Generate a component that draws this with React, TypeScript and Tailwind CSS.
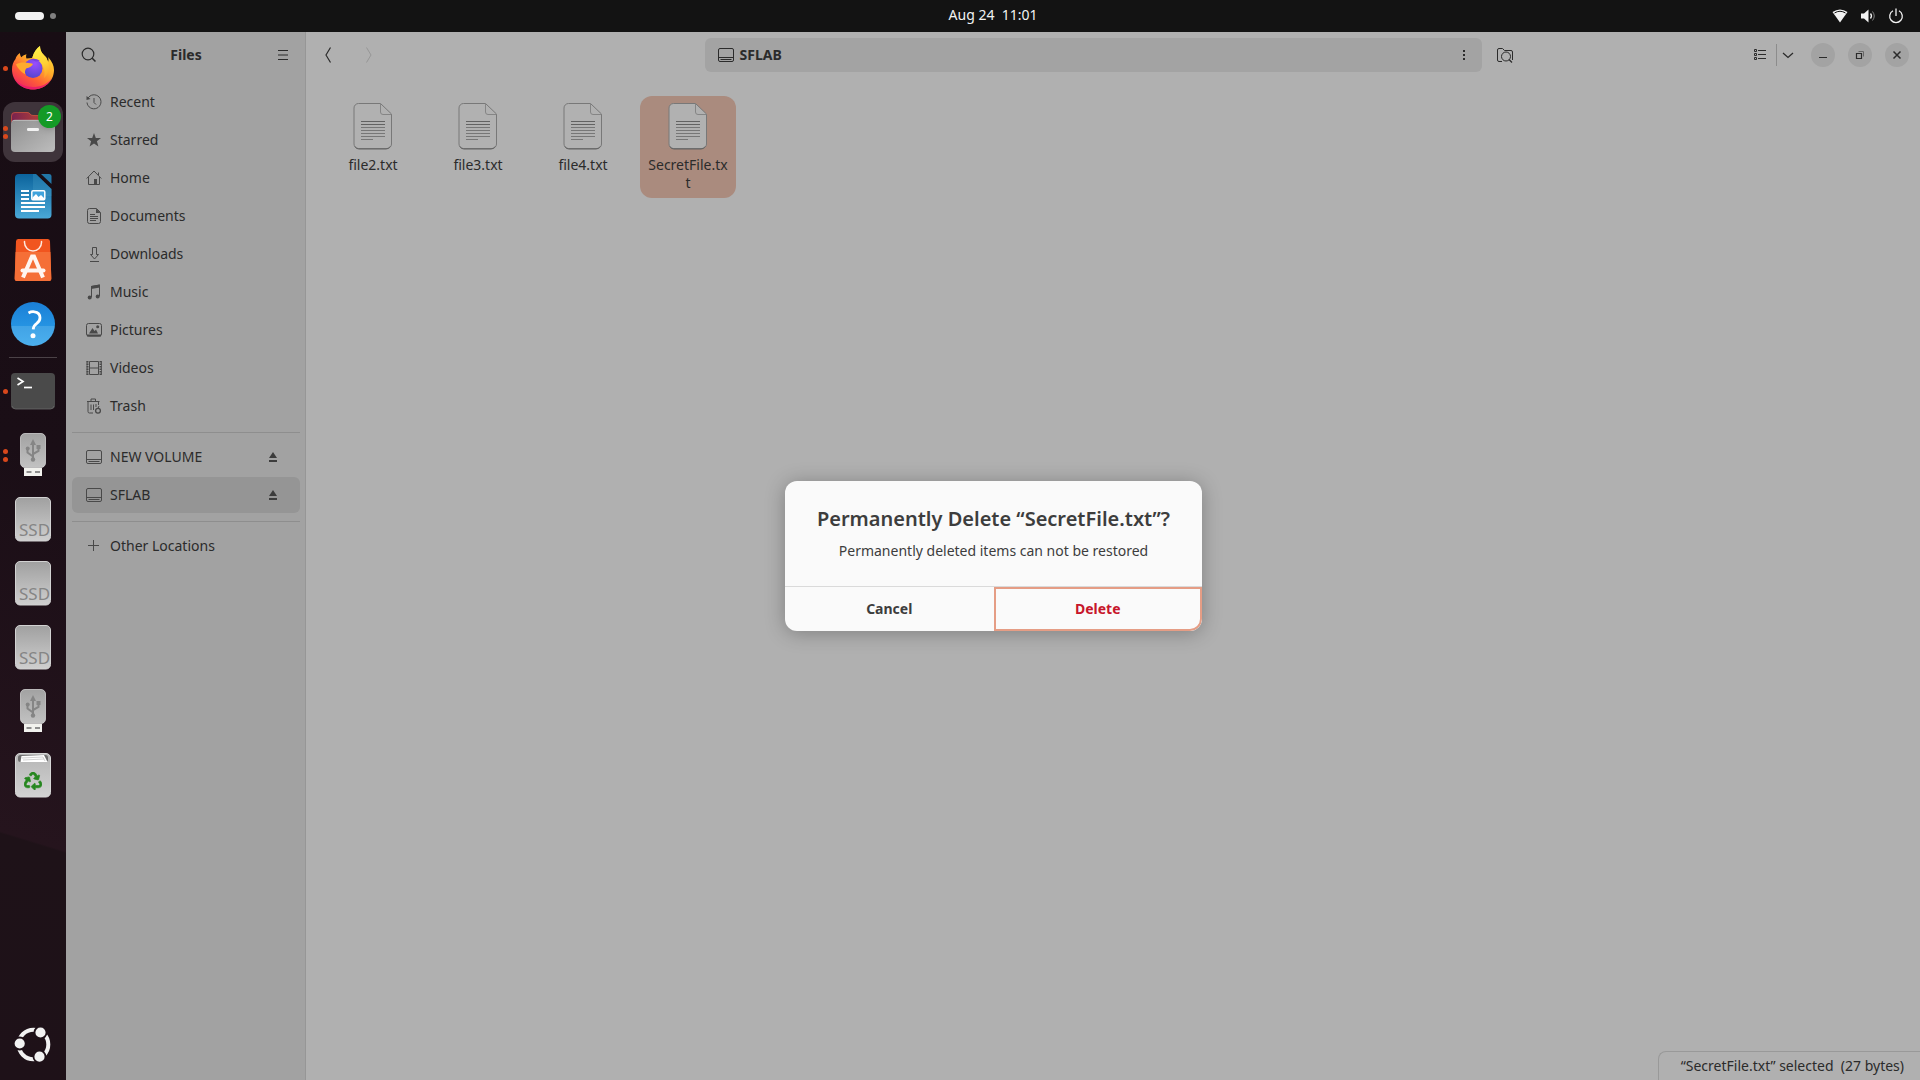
import type { ReactNode } from "react";
import { FaRecycle } from "react-icons/fa";

/* ---------- dock artwork ---------- */

function Art({ children, label }: { children: ReactNode; label: string }) {
  return (
    <svg viewBox="0 0 48 48" className="size-12" role="img" aria-label={label}>
      {children}
    </svg>
  );
}

function Firefox() {
  return (
    <Art label="Firefox">
      <defs>
        <linearGradient id="ffBody" x1="0.9" y1="0.1" x2="0.3" y2="1">
          <stop offset="0" stopColor="#ffe33a" />
          <stop offset="0.4" stopColor="#ffac2a" />
          <stop offset="0.7" stopColor="#ff5f36" />
          <stop offset="1" stopColor="#ee2a5c" />
        </linearGradient>
        <linearGradient id="ffFlame" x1="0.4" y1="0" x2="0.6" y2="1">
          <stop offset="0" stopColor="#fff14a" />
          <stop offset="0.6" stopColor="#ffd034" />
          <stop offset="1" stopColor="#ffa02b" />
        </linearGradient>
        <radialGradient id="ffGlobe" cx="0.6" cy="0.25" r="0.8">
          <stop offset="0" stopColor="#9a4dff" />
          <stop offset="1" stopColor="#5145cc" />
        </radialGradient>
      </defs>
      <path
        d="M6.500 15 C7 12.500 8.500 10.500 11 9 C11 11 11.500 12.500 12.500 13.200 C14 11.500 15.500 10.800 17.500 10.300 C16.800 12 17 13.500 17.500 14.500 L23 14 C25 9 27 5 31 2 C31 8 34 10 37 13 C38 15 38.500 17 38.800 18.500 C39.600 17 39.700 15 39 13 C43 17 45 22 45 26 C45 37 35.500 45.500 24 45.500 C12 45.500 3 36.500 3 25.500 C3 21.500 4.200 17.500 6.500 15 Z"
        fill="url(#ffBody)"
      />
      <path d="M5 34 C9 42 17 45.500 24 45.500 C33 45.500 40 40.500 43 34 C38 41 31 43 24 43 C16 43 9 40 5 34 Z" fill="#e8176f" opacity="0.8" />
      <path d="M23.500 13.500 C24.500 8 27.500 4.500 31 2 C31 8 34.500 10.500 37.500 14 C41 20 41.500 29 35 34 C37 26 34 20 29 17 Z" fill="url(#ffFlame)" />
      <circle cx="24" cy="24.500" r="9.500" fill="url(#ffGlobe)" />
      <path d="M7 20.500 C10 18 15 18.500 18 18.700 C20 18.800 23 19.200 24 20 C23 22.500 20.500 23.500 17.500 24.300 C16 26 15.500 28 16.500 30.500 C12 28 9 24.500 7 20.500 Z" fill="#ffab2e" />
      <path d="M21 15.500 C24 14 28 14.500 31 17 C29 16.800 28 17 27 17.500 C25 16.500 23 16 21 15.500 Z" fill="#7a3fe0" />
    </Art>
  );
}

function FilesApp() {
  return (
    <Art label="Files">
      <defs>
        <linearGradient id="fBack" x1="0" y1="0" x2="1" y2="0">
          <stop offset="0" stopColor="#77214f" />
          <stop offset="1" stopColor="#d0502f" />
        </linearGradient>
        <linearGradient id="fFront" x1="0" y1="0" x2="1" y2="1">
          <stop offset="0" stopColor="#8f8f8f" />
          <stop offset="1" stopColor="#bdbdbd" />
        </linearGradient>
      </defs>
      <path d="M2 20 V8 a4 4 0 0 1 4 -4 H18 q2 0 3 1.500 t3 1.500 H42 a4 4 0 0 1 4 4 V20 Z" fill="url(#fBack)" />
      <path d="M2.500 14 V8 a3.500 3.500 0 0 1 3.500 -3.500 H18 q2 0 3 1.500 t3 1.500 H42" fill="none" stroke="#c2543f" strokeWidth="0.8" />
      <rect x="2" y="12" width="44" height="32" rx="4" fill="url(#fFront)" />
      <path d="M3.500 13 q1 -0.700 2.500 -0.700 H42 q1.500 0 2.500 0.700" fill="none" stroke="#c8c8c8" strokeWidth="0.8" />
      <rect x="18" y="20" width="12" height="3" rx="1.200" fill="#f2f2f2" />
    </Art>
  );
}

function Writer() {
  return (
    <Art label="LibreOffice Writer">
      <defs>
        <linearGradient id="wr" x1="0" y1="0" x2="0" y2="1">
          <stop offset="0" stopColor="#0b639c" />
          <stop offset="1" stopColor="#4aa9d8" />
        </linearGradient>
      </defs>
      <path d="M10 2 H27 L42.500 17 V42.500 a4 4 0 0 1 -4 4 H10 a4 4 0 0 1 -4 -4 V6 a4 4 0 0 1 4 -4 Z" fill="url(#wr)" />
      <path d="M24 2 H27 L42.500 17 V24 H24 Z" fill="#4aa0c8" opacity="0.3" />
      <path d="M32 2 H40 a2.500 2.500 0 0 1 2.500 2.500 V12 Z" fill="#2277a8" />
      <path d="M12 19 h8 M12 23 h8 M12 27 h8 M12 31 h24 M12 35 h24 M12 39 h18" stroke="#fff" strokeWidth="2" />
      <rect x="22.800" y="18.800" width="13" height="9" rx="1.200" fill="#3fa3dc" stroke="#fff" strokeWidth="1.500" />
      <path d="M23.500 27 V25.500 L27 22 l2.500 3 l2.500 -2 l3 3 V27 Z" fill="#fff" />
    </Art>
  );
}

function AppCenter() {
  return (
    <Art label="App Center">
      <path d="M9.500 3 H38.500 a2.500 2.500 0 0 1 2.500 2.300 L42.300 42 a2.800 2.800 0 0 1 -2.800 3 H8.500 a2.800 2.800 0 0 1 -2.800 -3 L7 5.300 a2.500 2.500 0 0 1 2.500 -2.300 Z" fill="#f1551f" />
      <path d="M6.600 16 H41.400 L42.300 42 a2.800 2.800 0 0 1 -2.800 3 H8.500 a2.800 2.800 0 0 1 -2.800 -3 Z" fill="#f56f37" />
      <path d="M15.500 5.500 v1 a8.500 8.500 0 0 0 17 0 v-1" fill="none" stroke="#fde9df" strokeWidth="1.500" strokeLinecap="round" />
      <path d="M14 41.500 L23 20.500 H25 L34 41.500" fill="none" stroke="#fff5f0" strokeWidth="4" />
      <path d="M13.500 34.500 H34.500" stroke="#fff5f0" strokeWidth="4" strokeLinecap="round" />
    </Art>
  );
}

function Help() {
  return (
    <Art label="Help">
      <defs>
        <linearGradient id="hp" x1="0" y1="0" x2="0" y2="1">
          <stop offset="0" stopColor="#1b7fd6" />
          <stop offset="0.540" stopColor="#2593e2" />
          <stop offset="0.550" stopColor="#41a3e6" />
          <stop offset="1" stopColor="#4cb0ee" />
        </linearGradient>
      </defs>
      <circle cx="24" cy="24" r="22" fill="url(#hp)" />
      <path d="M19.500 13 q3 -1.700 6 -1.200 q5.500 0.700 5.500 6 q0 3.200 -3.200 5.600 q-3.300 2.300 -3.600 6" fill="none" stroke="#fff" strokeWidth="2.800" />
      <circle cx="24" cy="35.700" r="2.500" fill="#fff" />
    </Art>
  );
}

function TerminalApp() {
  return (
    <Art label="Terminal">
      <rect x="2" y="6" width="44" height="36" rx="4" fill="#4a4a4a" />
      <path d="M3 39 q1 3 3.500 3 H41.500 q2.500 0 3.500 -3" fill="none" stroke="#6a6a6a" strokeWidth="0.8" />
      <path d="M8.500 11 l5.500 3.500 l-5.500 3.500" fill="none" stroke="#fff" strokeWidth="1.700" />
      <path d="M15 20.500 h8" stroke="#fff" strokeWidth="1.700" />
    </Art>
  );
}

function Usb() {
  return (
    <Art label="USB drive">
      <defs>
        <linearGradient id="us" x1="0" y1="0" x2="0" y2="1">
          <stop offset="0" stopColor="#a2a2a2" />
          <stop offset="1" stopColor="#c2c2c2" />
        </linearGradient>
      </defs>
      <rect x="11.500" y="2.500" width="25" height="34" rx="4.500" fill="url(#us)" stroke="#d0d0d0" strokeWidth="0.800" />
      <g fill="none" stroke="#858585" strokeWidth="2">
        <path d="M24 12 V29" />
        <path d="M24 25.500 L18.500 21.500 V18" />
        <path d="M24 23 L29.500 20 V16.500" />
      </g>
      <path d="M24 8 l3 6 h-6 Z" fill="#858585" />
      <circle cx="18.700" cy="17.500" r="2" fill="#858585" />
      <rect x="27.500" y="14" width="4" height="4" fill="#858585" />
      <circle cx="24" cy="28.500" r="2.200" fill="#858585" />
      <rect x="15" y="37" width="18" height="8" fill="#f2f2ee" />
      <path d="M17.500 41 h5 M26 41 h5" stroke="#8e8e8e" strokeWidth="2" />
    </Art>
  );
}

function Ssd() {
  return (
    <Art label="SSD">
      <defs>
        <linearGradient id="sd" x1="0" y1="0" x2="0" y2="1">
          <stop offset="0" stopColor="#a0a0a0" />
          <stop offset="1" stopColor="#cfcfcf" />
        </linearGradient>
      </defs>
      <rect x="6.500" y="2.500" width="35" height="43.500" rx="4.500" fill="url(#sd)" stroke="#d2d2d2" strokeWidth="1" />
      <text x="10" y="41" fontFamily="Noto Sans, sans-serif" fontSize="17" fill="#858585">
        SSD
      </text>
    </Art>
  );
}

function TrashApp() {
  return (
    <Art label="Trash">
      <defs>
        <linearGradient id="tr" x1="0" y1="0" x2="0" y2="1">
          <stop offset="0" stopColor="#b5b5b5" />
          <stop offset="1" stopColor="#d2d2d2" />
        </linearGradient>
      </defs>
      <rect x="6.500" y="2.500" width="35" height="43.500" rx="4.500" fill="url(#tr)" stroke="#d6d6d6" strokeWidth="1" />
      <rect x="9" y="4" width="30" height="7" rx="2.500" fill="#6d6d6d" />
      <path d="M11.500 11 L12.500 5 L35 4 L38.500 11 Z" fill="#fff" />
      <path d="M13 7 L34 6 L36 10 M14 9 L35 8" stroke="#bdbdbd" strokeWidth="0.700" fill="none" />
      <FaRecycle x="15" y="21" size={18} color="#26871f" stroke="#26871f" strokeWidth="20" />
    </Art>
  );
}

function UbuntuLogo() {
  return (
    <svg viewBox="0 0 48 48" className="size-12" role="img" aria-label="Show Apps">
      <circle cx="24.500" cy="24.500" r="14.800" fill="none" stroke="#f2f2f2" strokeWidth="4" />
      <g fill="#f2f2f2" stroke="#1e1118" strokeWidth="1.800">
        <circle cx="10.700" cy="23.500" r="6" />
        <circle cx="31.500" cy="12.500" r="6" />
        <circle cx="30.500" cy="36.700" r="6" />
      </g>
    </svg>
  );
}

/* ---------- symbolic icons ---------- */

function Sym({ children }: { children: ReactNode }) {
  return (
    <svg viewBox="0 0 16 16" className="size-4 shrink-0" fill="none" stroke="currentColor" strokeWidth="1" aria-hidden="true">
      {children}
    </svg>
  );
}

const DriveIcon = () => (
  <Sym>
    <rect x="0.500" y="1.500" width="15" height="13" rx="1.500" />
    <path d="M1 10.500 H15 M2.500 12.500 H13.500" />
  </Sym>
);

const EjectIcon = () => (
  <Sym>
    <path d="M8 3 L12 9 H4 Z M4 11 h8 v2 H4 Z" fill="currentColor" stroke="none" />
  </Sym>
);

const places: { name: string; icon: ReactNode }[] = [
  {
    name: "Recent",
    icon: (
      <Sym>
        <path d="M1.800 4.500 A7 7 0 1 1 1 8.500 M8 4 V8.500 L10 10.500" />
        <path d="M0.500 2 L4.500 5 L0.500 6 Z" fill="currentColor" stroke="none" />
      </Sym>
    ),
  },
  {
    name: "Starred",
    icon: (
      <Sym>
        <path d="M8 1 L9.800 6.100 H15 L10.900 9.300 L12.400 14.500 L8 11.500 L3.600 14.500 L5.100 9.300 L1 6.100 H6.200 Z" fill="currentColor" stroke="none" />
      </Sym>
    ),
  },
  {
    name: "Home",
    icon: (
      <Sym>
        <path d="M0.700 8.500 L8 1 L15.300 8.500 M2.500 7 V14.500 H13.500 V7 M12.500 5 V2.500" />
        <path d="M8 9 h3 v5.500 h-3 Z" fill="currentColor" stroke="none" />
      </Sym>
    ),
  },
  {
    name: "Documents",
    icon: (
      <Sym>
        <path d="M3.500 0.500 H10.500 L14.500 4.500 V13.500 a2 2 0 0 1 -2 2 H3.500 a2 2 0 0 1 -2 -2 V2.500 a2 2 0 0 1 2 -2 Z M4 6.500 h5 M4 8.500 h8 M4 10.500 h8 M4 12.500 h6" />
        <path d="M10 0.500 V5 H14.500 Z" fill="currentColor" stroke="none" />
      </Sym>
    ),
  },
  {
    name: "Downloads",
    icon: (
      <Sym>
        <path d="M6.500 1.500 h4 v7 h2 L8.500 13 L4.500 8.500 h2 Z M4 15.500 h9" />
      </Sym>
    ),
  },
  {
    name: "Music",
    icon: (
      <Sym>
        <path d="M5.500 13 V2.500 L13.500 1 V12" />
        <path d="M5 2 L14 0.500 V3.500 L5 5 Z" fill="currentColor" stroke="none" />
        <circle cx="3.700" cy="13.500" r="2" fill="currentColor" stroke="none" />
        <circle cx="11.700" cy="12.500" r="2" fill="currentColor" stroke="none" />
      </Sym>
    ),
  },
  {
    name: "Pictures",
    icon: (
      <Sym>
        <rect x="0.500" y="1.500" width="15" height="12.500" rx="2" />
        <path d="M1 13.500 H15" strokeWidth="2" />
        <path d="M3 11.500 L6.500 6 L8.500 9 L10 7.500 L12 11.500 Z" fill="currentColor" stroke="none" />
        <circle cx="11.700" cy="4.700" r="1.500" fill="currentColor" stroke="none" />
      </Sym>
    ),
  },
  {
    name: "Videos",
    icon: (
      <Sym>
        <path d="M3.500 1.500 H12.500 V14.500 H3.500 Z M3.500 8 H12.500" />
        <path d="M1.500 1 V15 M14.500 1 V15" strokeWidth="2" strokeDasharray="1.500 1" />
        <path d="M1 1 V15 M15.500 1 V15" strokeWidth="0.800" />
      </Sym>
    ),
  },
  {
    name: "Trash",
    icon: (
      <Sym>
        <path d="M1 3.500 H13.500 M5 3 V1 H9.500 V3 M2 4 V13.500 q0 1.500 1.500 1.500 H7 M5 6.500 V12 M7.500 6.500 V12 M12.500 4 V7 M10 6 V9" />
        <circle cx="12" cy="12.800" r="2.400" strokeWidth="1.300" />
        <path d="M12 10.500 L13 8" />
      </Sym>
    ),
  },
];

/* ---------- pieces ---------- */

function DockItem({ children, dots = 0, active = false, badge }: { children: ReactNode; dots?: number; active?: boolean; badge?: string }) {
  return (
    <button type="button" className="relative flex h-16 w-full items-center justify-center">
      <span className="absolute left-[3px] flex flex-col gap-[3px]">
        {Array.from({ length: dots }, (_, i) => (
          <span key={i} className="z-10 size-[5px] rounded-full bg-[#d9481c]" />
        ))}
      </span>
      <span className={active ? "flex size-[60px] items-center justify-center rounded-xl bg-[#3f343b]" : "flex size-[60px] items-center justify-center"}>
        {children}
      </span>
      {badge && (
        <span className="absolute top-[5px] right-[5px] flex size-[23px] items-center justify-center rounded-full bg-[#149a26] text-xs text-white shadow-md">
          {badge}
        </span>
      )}
    </button>
  );
}

function TextFile({ name, selected = false }: { name: string; selected?: boolean }) {
  return (
    <button
      type="button"
      className={
        selected
          ? "flex w-24 flex-col items-center gap-1.5 self-start rounded-xl bg-[#aa8b7e] p-1.5"
          : "flex w-24 flex-col items-center gap-1.5 self-start rounded-xl p-1.5"
      }
    >
      <svg viewBox="0 0 48 48" className="size-12" aria-hidden="true">
        <path d="M9.500 1.500 H31.500 L42.500 12 V42 a4.500 4.500 0 0 1 -4.500 4.500 H9.500 a4.500 4.500 0 0 1 -4.500 -4.500 V6 a4.500 4.500 0 0 1 4.500 -4.500 Z" fill="#b1b1b1" stroke="#787878" strokeWidth="1" />
        <path d="M6 44.500 q1 2.500 4 2.500 H37 q3 0 4 -2.500" fill="none" stroke="#636363" strokeWidth="1" />
        <path d="M31.500 2 V10 q0 2.500 2.500 2.500 H42.500" fill="none" stroke="#858585" strokeWidth="1" />
        <path d="M12 19.500 h24 M12 22.500 h24" stroke="#626262" strokeWidth="1" />
        <path d="M12 25.500 h24 M12 28.500 h24 M12 31.500 h24 M12 34.500 h24 M12 37.500 h12" stroke="#777777" strokeWidth="1" />
      </svg>
      <span className="w-full text-center text-sm leading-[18px] break-all">{name}</span>
    </button>
  );
}

function Place({ name, icon, eject = false, selected = false }: { name: string; icon: ReactNode; eject?: boolean; selected?: boolean }) {
  return (
    <li className="py-px">
      <div className={selected ? "flex h-9 items-center rounded-md bg-[#959595] pr-[19px] pl-3.5" : "flex h-9 items-center rounded-md pr-[19px] pl-3.5"}>
        <a href="#" className="flex flex-1 items-center gap-2 text-sm text-[#2b2b2b]">
          <span className="text-[#494949]">{icon}</span>
          {name}
        </a>
        {eject && (
          <button type="button" aria-label={"Eject " + name} className="text-[#3c3c3c]">
            <EjectIcon />
          </button>
        )}
      </div>
    </li>
  );
}

function WindowButton({ label, children }: { label: string; children: ReactNode }) {
  return (
    <button type="button" aria-label={label} className="flex size-6 items-center justify-center rounded-full bg-[#a3a3a3]">
      {children}
    </button>
  );
}

/* ---------- page ---------- */

export default function App() {
  return (
    <div className="flex h-screen flex-col overflow-hidden bg-[#131313] font-['Noto_Sans',sans-serif] text-[#2b2b2b]">
      <header className="flex h-8 shrink-0 items-center text-[#f2f2f2]">
        <div className="flex w-[66px] items-center gap-1.5 pl-[15px]">
          <span className="h-2 w-[29px] rounded-full bg-[#f2f2f2]" />
          <span className="size-1.5 rounded-full bg-[#808080]" />
        </div>
        <div className="grid flex-1 grid-cols-3 items-center">
          <span />
          <button type="button" className="pb-0.5 text-center text-sm leading-5 whitespace-pre">
            {"Aug 24  11:01"}
          </button>
          <div className="flex items-center justify-end gap-3 pr-4">
            <Sym>
              <path d="M0.500 4 Q8 -1 15.500 4 L8 14.500 Z" fill="currentColor" stroke="none" />
              <path d="M2.500 5 Q8 1.500 13.500 5" stroke="#131313" />
            </Sym>
            <Sym>
              <path d="M1 5.500 H4 L8.500 1.500 V14.500 L4 10.500 H1 Z" fill="currentColor" stroke="none" />
              <path d="M10.500 5.500 q2 2.500 0 5" strokeWidth="1.300" />
              <path d="M12.500 3.500 q3.500 4.500 0 9" stroke="#808080" />
            </Sym>
            <Sym>
              <path d="M5 2.700 A6.300 6.300 0 1 0 11 2.700 M8 0.500 V8" strokeWidth="1.300" />
            </Sym>
          </div>
        </div>
      </header>

      <div className="flex min-h-0 flex-1">
        <nav
          aria-label="Dock"
          className="flex w-[66px] shrink-0 flex-col bg-[linear-gradient(197deg,#180d14_0%,#1a0e16_40%,#25141d_76.7%,#1e1218_76.9%,#1e1118_100%)] pt-1 pb-1"
        >
          <DockItem dots={1}><Firefox /></DockItem>
          <DockItem dots={2} active badge="2"><FilesApp /></DockItem>
          <DockItem><Writer /></DockItem>
          <DockItem><AppCenter /></DockItem>
          <DockItem><Help /></DockItem>
          <hr className="mx-[9px] my-px border-t border-[#4b4247]" />
          <DockItem dots={1}><TerminalApp /></DockItem>
          <DockItem dots={2}><Usb /></DockItem>
          <DockItem><Ssd /></DockItem>
          <DockItem><Ssd /></DockItem>
          <DockItem><Ssd /></DockItem>
          <DockItem><Usb /></DockItem>
          <DockItem><TrashApp /></DockItem>
          <div className="mt-auto">
            <DockItem><UbuntuLogo /></DockItem>
          </div>
        </nav>

        <div className="relative flex min-w-0 flex-1">
          <aside className="flex w-60 shrink-0 flex-col border-r border-[#969696] bg-[#a2a2a2]">
            <div className="flex h-[46px] shrink-0 items-center justify-between pr-3.5 pl-[15px]">
              <button type="button" aria-label="Search">
                <Sym>
                  <circle cx="7" cy="7" r="5.800" strokeWidth="1.200" />
                  <path d="M11.200 11.200 L14.500 14.500" strokeWidth="1.500" />
                </Sym>
              </button>
              <h1 className="text-sm font-bold">Files</h1>
              <button type="button" aria-label="Main menu">
                <Sym>
                  <path d="M3 3.500 h10 M3 8 h10 M3 12.500 h10" />
                </Sym>
              </button>
            </div>
            <div className="pt-[5px] pr-[5px] pl-1.5">
              <ul>
                {places.map((p) => (
                  <Place key={p.name} name={p.name} icon={p.icon} />
                ))}
              </ul>
              <hr className="mt-[7px] mb-[5px] border-t border-[#8e8e8e]" />
              <ul>
                <Place name="NEW VOLUME" icon={<DriveIcon />} eject />
                <Place name="SFLAB" icon={<DriveIcon />} eject selected />
              </ul>
              <hr className="mt-[7px] mb-[5px] border-t border-[#8e8e8e]" />
              <ul>
                <Place
                  name="Other Locations"
                  icon={
                    <Sym>
                      <path d="M2 7.500 h11 M7.500 2 v11" />
                    </Sym>
                  }
                />
              </ul>
            </div>
          </aside>

          <main className="flex min-w-0 flex-1 flex-col bg-[#b0b0b0]">
            <div className="grid h-[46px] shrink-0 grid-cols-[1fr_minmax(0,817px)_1fr] items-center">
              <div className="flex items-center gap-6 pl-3.5">
                <button type="button" aria-label="Back">
                  <Sym>
                    <path d="M10.500 0.500 L6 8 L10.500 15.500" strokeWidth="1.200" />
                  </Sym>
                </button>
                <button type="button" aria-label="Forward" disabled className="text-[#979797]">
                  <Sym>
                    <path d="M6.500 0.500 L11 8 L6.500 15.500" />
                  </Sym>
                </button>
              </div>
              <div className="flex items-center gap-1.5">
                <div className="flex h-[34px] flex-1 items-center gap-1.5 rounded-md bg-[#a3a3a3] pr-2.5 pl-[13px]">
                  <DriveIcon />
                  <span className="flex-1 text-sm font-bold">SFLAB</span>
                  <button type="button" aria-label="Current folder menu">
                    <Sym>
                      <path d="M7 3 h2 v2 h-2 Z M7 7 h2 v2 h-2 Z M7 11 h2 v2 h-2 Z" fill="currentColor" stroke="none" />
                    </Sym>
                  </button>
                </div>
                <button type="button" aria-label="Search folder" className="flex size-[34px] items-center justify-center">
                  <Sym>
                    <path d="M5 14.500 H2 a1.500 1.500 0 0 1 -1.500 -1.500 V3 a1.500 1.500 0 0 1 1.500 -1.500 H5.500 L7.500 3.500 H14 a1.500 1.500 0 0 1 1.500 1.500 V13" />
                    <circle cx="9" cy="9.500" r="4.500" />
                    <path d="M12 12.500 L15 15.500" strokeWidth="1.300" />
                  </Sym>
                </button>
              </div>
              <div className="flex items-center justify-end pr-[11px]">
                <button type="button" aria-label="List view">
                  <Sym>
                    <path d="M2.500 2.500 h2 v2 h-2 Z M2.500 6.500 h2 v2 h-2 Z M2.500 10.500 h2 v2 h-2 Z M6 3.500 h8 M6 7.500 h8 M6 11.500 h8" />
                  </Sym>
                </button>
                <span className="ml-2 h-[22px] w-px bg-[#8c8c8c]" />
                <button type="button" aria-label="View options" className="mr-[15px] ml-[3px]">
                  <Sym>
                    <path d="M3 6 L8 10.500 L13 6" strokeWidth="1.300" />
                  </Sym>
                </button>
                <div className="flex gap-[13px]">
                  <WindowButton label="Minimize">
                    <Sym>
                      <path d="M4 10.500 h8" />
                    </Sym>
                  </WindowButton>
                  <WindowButton label="Restore">
                    <Sym>
                      <path d="M4.500 6.500 h5 v5 h-5 Z" strokeWidth="1.200" />
                      <path d="M6.500 4.500 h5 v5" stroke="#666666" />
                    </Sym>
                  </WindowButton>
                  <WindowButton label="Close">
                    <Sym>
                      <path d="M4.500 4.500 l7 7 M11.500 4.500 l-7 7" strokeWidth="1.500" />
                    </Sym>
                  </WindowButton>
                </div>
              </div>
            </div>

            <div className="flex flex-1 flex-wrap content-start gap-[9px] pt-[18px] pl-[19px]">
              <TextFile name="file2.txt" />
              <TextFile name="file3.txt" />
              <TextFile name="file4.txt" />
              <TextFile name="SecretFile.txt" selected />
            </div>

            <div className="flex h-[29px] shrink-0 items-center self-end rounded-tl-lg border-t border-l border-[#999999] pr-4 pl-[22px] text-sm whitespace-pre">
              {"“SecretFile.txt” selected  (27 bytes)"}
            </div>
          </main>

          <div className="absolute inset-0 flex items-center justify-center pl-px">
            <div
              role="alertdialog"
              aria-labelledby="dialog-title"
              aria-describedby="dialog-body"
              className="flex w-[417px] flex-col overflow-hidden rounded-xl bg-[#fafafa] text-center text-[#3d3d3d] shadow-[0_2px_20px_rgba(0,0,0,0.28)]"
            >
              <div className="flex flex-col items-center gap-2 py-[25px]">
                <h2 id="dialog-title" className="text-xl leading-[26px] font-semibold whitespace-nowrap">
                  Permanently Delete “SecretFile.txt”?
                </h2>
                <p id="dialog-body" className="text-sm leading-[21px]">
                  Permanently deleted items can not be restored
                </p>
              </div>
              <div className="grid grid-cols-2 border-t border-[#dadada] text-sm font-bold">
                <button type="button" className="h-11">
                  Cancel
                </button>
                <button type="button" className="h-11 rounded-br-xl border-2 border-[#e59d85] text-[#c7162b]">
                  Delete
                </button>
              </div>
            </div>
          </div>
        </div>
      </div>
    </div>
  );
}
